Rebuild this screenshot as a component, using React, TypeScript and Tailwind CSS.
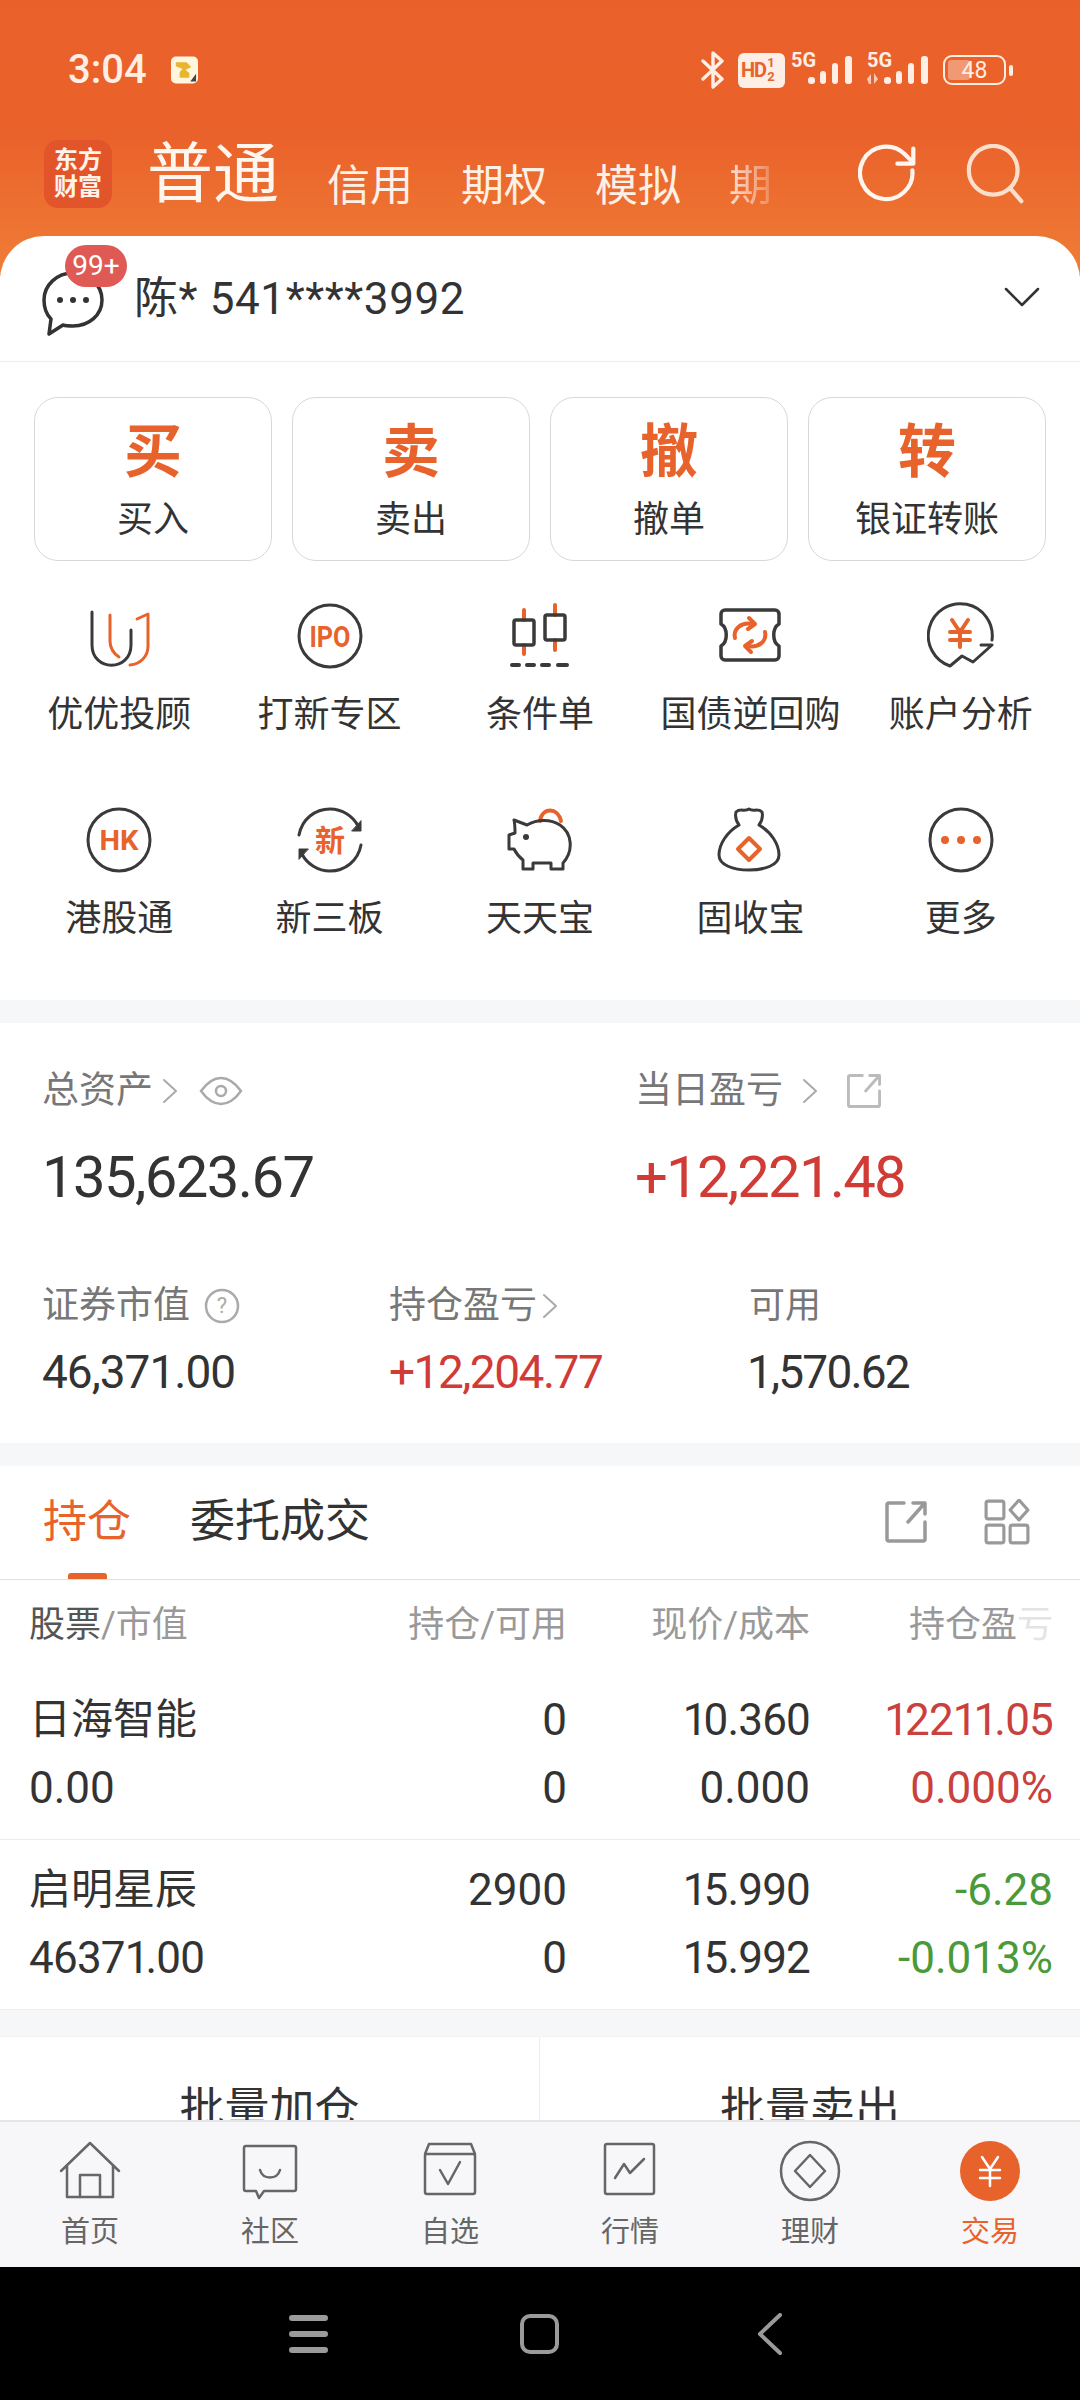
const ORANGE = "#e8632c";
const DARK = "#3a3a3a";

const actions = [
  { char: "买", label: "买入" },
  { char: "卖", label: "卖出" },
  { char: "撤", label: "撤单" },
  { char: "转", label: "银证转账" },
];

function GridSvg({ children }: { children: React.ReactNode }) {
  return (
    <svg width="68" height="68" viewBox="0 0 68 68" fill="none" stroke={DARK} strokeWidth="3" strokeLinecap="round" strokeLinejoin="round">
      {children}
    </svg>
  );
}

function BadgeText({ text, size, fit }: { text: string; size: number; fit?: number }) {
  return (
    <text x="34" y={34 + size * 0.36} textAnchor="middle" fontSize={size} fontWeight="700" fill={ORANGE} stroke="none" textLength={fit} lengthAdjust={fit ? "spacingAndGlyphs" : undefined} fontFamily="Roboto, 'Noto Sans CJK SC', sans-serif">
      {text}
    </text>
  );
}

const tools: { label: string; icon: React.ReactNode }[] = [
  {
    label: "优优投顾",
    icon: (
      <GridSvg>
        <path d="M7 10v33c0 27 39 27 39 0V28" />
        <path d="M25 13v26c0 7 3 12 9 16" stroke={ORANGE} />
        <path d="M52 17l11-5v32c0 11-8 18-18 19" stroke={ORANGE} />
      </GridSvg>
    ),
  },
  {
    label: "打新专区",
    icon: (
      <GridSvg>
        <circle cx="34" cy="34" r="31" />
        <BadgeText text="IPO" size={30} fit={41} />
      </GridSvg>
    ),
  },
  {
    label: "条件单",
    icon: (
      <GridSvg>
        <path d="M18 8v10M18 43v9M49 3v10M49 38v10" stroke={ORANGE} strokeWidth="4" />
        <rect x="8" y="18" width="20" height="25" rx="2" strokeWidth="3.5" />
        <rect x="39" y="13" width="20" height="25" rx="2" strokeWidth="3.5" />
        <path d="M6 63h7M21 63h7M36 63h7M52 63h9" strokeWidth="4" />
      </GridSvg>
    ),
  },
  {
    label: "国债逆回购",
    icon: (
      <GridSvg>
        <path d="M9 8h50a4 4 0 0 1 4 4v10c-7 4-7 18 0 22v10a4 4 0 0 1-4 4H9a4 4 0 0 1-4-4V44c7-4 7-18 0-22V12a4 4 0 0 1 4-4z" strokeWidth="3.5" />
        <path d="M19 36c-2-9 6-16 17-14" stroke={ORANGE} strokeWidth="4" />
        <path d="M33 16l6 6-7 5" stroke={ORANGE} strokeWidth="4" />
        <path d="M49 30c2 9-6 16-17 14" stroke={ORANGE} strokeWidth="4" />
        <path d="M35 50l-6-6 7-5" stroke={ORANGE} strokeWidth="4" />
      </GridSvg>
    ),
  },
  {
    label: "账户分析",
    icon: (
      <GridSvg>
        <path d="M65 38A32 32 0 1 0 23 64L35 54 46 60 65 43H54" />
        <path d="M25 18l8 12 8-12M33 30v15M23 30h20M23 38h20" stroke={ORANGE} strokeWidth="4" />
      </GridSvg>
    ),
  },
  {
    label: "港股通",
    icon: (
      <GridSvg>
        <circle cx="34" cy="34" r="31" />
        <BadgeText text="HK" size={28} fit={39} />
      </GridSvg>
    ),
  },
  {
    label: "新三板",
    icon: (
      <GridSvg>
        <path d="M3 29C6 13 19 3 34 3c12 0 23 7 28 17" />
        <path d="M65 39c-3 16-16 26-31 26-12 0-23-7-28-17" />
        <path d="M65 15v10h-9z" fill={DARK} strokeWidth="1" />
        <path d="M3 53V43h9z" fill={DARK} strokeWidth="1" />
        <BadgeText text="新" size={30} />
      </GridSvg>
    ),
  },
  {
    label: "天天宝",
    icon: (
      <GridSvg>
        <path d="M34 15c2-14 18-14 21 0" stroke={ORANGE} strokeWidth="4" />
        <path d="M8 14l13 5c10-6 24-6 33 0 12 8 14 26 3 38v6H45v-6H27v6H17v-9c-4-3-7-7-9-11H3V29l6-2c0-5 0-9-1-13z" />
        <circle cx="20" cy="31" r="3" fill={DARK} stroke="none" />
      </GridSvg>
    ),
  },
  {
    label: "固收宝",
    icon: (
      <GridSvg>
        <path d="M23 19c-3-4-4-9-3-13 4-4 9 0 13-3 4 3 9-1 13 3 1 4 0 9-3 13 12 7 20 19 20 30 0 10-14 15-30 15S3 59 3 49c0-11 8-23 20-30z" />
        <path d="M33 32l11 11-11 11-11-11z" stroke={ORANGE} strokeWidth="4" />
      </GridSvg>
    ),
  },
  {
    label: "更多",
    icon: (
      <GridSvg>
        <circle cx="34" cy="34" r="31" />
        <circle cx="18" cy="34" r="4" fill={ORANGE} stroke="none" />
        <circle cx="34" cy="34" r="4" fill={ORANGE} stroke="none" />
        <circle cx="50" cy="34" r="4" fill={ORANGE} stroke="none" />
      </GridSvg>
    ),
  },
];

const holdings = [
  { name: "日海智能", value: "0.00", hold: "0", free: "0", price: "10.360", cost: "0.000", pnl: "12211.05", pct: "0.000%", color: "text-[#c9403c]" },
  { name: "启明星辰", value: "46371.00", hold: "2900", free: "0", price: "15.990", cost: "15.992", pnl: "-6.28", pct: "-0.013%", color: "text-[#4a9a3a]" },
];

function NavSvg({ children }: { children: React.ReactNode }) {
  return (
    <svg width="64" height="64" viewBox="0 0 64 64" fill="none" stroke="#666" strokeWidth="2.5" strokeLinecap="round" strokeLinejoin="round">
      {children}
    </svg>
  );
}

const navItems: { label: string; active?: boolean; icon: React.ReactNode }[] = [
  {
    label: "首页",
    icon: (
      <NavSvg>
        <path d="M3 32L32 4l29 28M9 27v31h46V27" />
        <path d="M22 58V36h20v22" />
      </NavSvg>
    ),
  },
  {
    label: "社区",
    icon: (
      <NavSvg>
        <path d="M8 7h48a2 2 0 0 1 2 2v41a2 2 0 0 1-2 2H26l-5 7-3-7H8a2 2 0 0 1-2-2V9a2 2 0 0 1 2-2z" />
        <path d="M22 31c3 10 17 10 20 0" />
      </NavSvg>
    ),
  },
  {
    label: "自选",
    icon: (
      <NavSvg>
        <path d="M7 15l4-10h42l4 10" />
        <rect x="7" y="15" width="50" height="40" rx="2" />
        <path d="M22 31l8 14 12-22" />
      </NavSvg>
    ),
  },
  {
    label: "行情",
    icon: (
      <NavSvg>
        <rect x="7" y="5" width="49" height="50" rx="2" />
        <path d="M17 39l9-14 6 9 14-14" />
      </NavSvg>
    ),
  },
  {
    label: "理财",
    icon: (
      <NavSvg>
        <circle cx="32" cy="32" r="29" />
        <path d="M32 16l15 16-15 16-15-16z" />
      </NavSvg>
    ),
  },
  {
    label: "交易",
    active: true,
    icon: (
      <svg width="64" height="64" viewBox="0 0 64 64" fill="none">
        <circle cx="32" cy="32" r="30" fill={ORANGE} />
        <path d="M24 18l8 12 8-12M32 30v17M22 31h20M22 39h20" stroke="#fff" strokeWidth="2.5" strokeLinecap="round" />
      </svg>
    ),
  },
];

function Signal({ down }: { down?: boolean }) {
  return (
    <svg width="61" height="36" viewBox="0 0 61 36" fill="#fdeee6" className="mb-[8px]">
      <text x="0" y="19" fontSize="20" fontWeight="700" fontFamily="Roboto, sans-serif">5G</text>
      {down && <path d="M0 31l4-5v10H2zM7 25l4 6-4 5z" opacity=".75" />}
      <rect x="17" y="29" width="7" height="7" rx="3" />
      <rect x="29" y="23" width="6" height="13" rx="3" />
      <rect x="41" y="15" width="6" height="21" rx="3" />
      <rect x="54" y="8" width="7" height="28" rx="3" />
    </svg>
  );
}

// digits in the reference are proportional, so numbers with a 1 sit tighter than Roboto's
function Num({ value }: { value: string }) {
  return (
    <span className={value.includes("1") ? "tracking-[-0.8px]" : ""}>
      {value.split("").map((c, i) =>
        c === "1" ? (
          <span key={i} className="tracking-[-4px]">
            {c}
          </span>
        ) : (
          c
        ),
      )}
    </span>
  );
}

function StatusBar() {
  return (
    <div className="h-[120px] flex items-start justify-between pt-[48px] pl-[68px] pr-[67px] text-[#fdeee6]">
      <div className="flex items-center h-[44px]">
        <span className="text-[40px] font-medium leading-[44px]">3:04</span>
        <svg width="27" height="28" viewBox="0 0 28 28" className="ml-[24px]">
          <rect width="28" height="28" rx="5" fill="#fff6e0" />
          <path d="M5 6h11l5 5-6 3 4 3v5H9v-6l3-3-7-3z" fill="#e9b52f" />
          <path d="M20 26l6-8v8z" fill="#444" />
        </svg>
      </div>
      <div className="flex items-center h-[44px]">
        <svg width="24" height="38" viewBox="0 0 24 38" fill="none" stroke="#fdeee6" strokeWidth="3.4" strokeLinejoin="round" strokeLinecap="round">
          <path d="M2 10l19 18-9 8V2l9 8L2 28" />
        </svg>
        <span className="ml-[13px] w-[47px] h-[35px] rounded-[6px] bg-[#fdeee6] flex items-center pl-[3px] text-[#e8632c] font-bold">
          <span className="text-[20px] leading-none tracking-[-1px]">HD</span>
          <span className="text-[13px] leading-[14px] flex flex-col ml-[1px]">
            <span>1</span>
            <span>2</span>
          </span>
        </span>
        <span className="ml-[6px] flex">
          <Signal />
        </span>
        <span className="ml-[15px] flex">
          <Signal down />
        </span>
        <span className="relative flex items-center ml-[15px]">
          <span className="w-[63px] h-[30px] rounded-[9px] border-[2.5px] border-[#fdeee6] flex items-center justify-center relative">
            <span className="absolute left-[3px] top-[3px] bottom-[3px] w-[22px] rounded-[3px] bg-[#fdeee6]/40" />
            <span className="relative text-[23px] leading-none">48</span>
          </span>
          <span className="w-[4px] h-[11px] ml-[3px] rounded-[2px] bg-[#fdeee6]" />
        </span>
      </div>
    </div>
  );
}

function Header() {
  return (
    <div className="h-[156px] flex items-start pl-[44px] pr-[54px] pt-[20px] text-white">
      <div className="w-[68px] h-[68px] rounded-[14px] bg-[#e2552a] flex flex-col items-center justify-center text-[24px] leading-[27px] font-bold text-[#fff2ea]">
        <span>东方</span>
        <span>财富</span>
      </div>
      <span className="ml-[35px] mt-[1px] w-[131px] text-[66px] leading-[68px] whitespace-nowrap text-[#fff6f0]">普通</span>
      <div className="ml-[49px] mt-[22px] w-[446px] flex gap-[48px] text-[43px] leading-[48px] text-[#fdf0e6] whitespace-nowrap">
        <span>信用</span>
        <span>期权</span>
        <span>模拟</span>
        <span className="bg-gradient-to-r from-white/80 to-white/20 bg-clip-text text-transparent">期</span>
      </div>
      <div className="ml-auto flex items-center gap-[48px] pt-[4px]">
        <svg width="60" height="60" viewBox="0 0 64 64" fill="none" stroke="#fff6f0" strokeWidth="4.5" strokeLinecap="round" strokeLinejoin="round">
          <path d="M58 28a28 28 0 1 1-8-17l8 8" />
          <path d="M59 5v16H42" />
        </svg>
        <svg width="60" height="60" viewBox="0 0 64 64" fill="none" stroke="#fbdfcd" strokeWidth="4.5" strokeLinecap="round">
          <circle cx="29" cy="28" r="26" />
          <path d="M47 47l12 14" />
        </svg>
      </div>
    </div>
  );
}

function AccountRow() {
  return (
    <div className="h-[126px] border-b border-[#ececec] flex items-center pl-[41px] pr-[40px]">
      <div className="relative w-[64px] h-[66px] mt-[8px]">
        <svg width="64" height="66" viewBox="0 0 64 66" fill="none" stroke="#333" strokeWidth="3.5" strokeLinejoin="round">
          <path d="M32 3c16 0 29 12 29 27S48 56 32 56c-4 0-7 0-10-1L8 64l2-15C5 44 3 37 3 30 3 15 16 3 32 3z" />
          <circle cx="19" cy="30" r="3" fill="#333" stroke="none" />
          <circle cx="32" cy="30" r="3" fill="#333" stroke="none" />
          <circle cx="45" cy="30" r="3" fill="#333" stroke="none" />
        </svg>
        <span className="absolute left-[24px] -top-[25px] w-[62px] h-[42px] rounded-[21px] bg-[#e05a55] text-white text-[28px] leading-[42px] text-center">99+</span>
      </div>
      <span className="ml-[29px] text-[44px] leading-[52px] text-[#333] tracking-[0.6px]">陈* 541****3992</span>
      <svg width="36" height="22" viewBox="0 0 36 22" fill="none" stroke="#333" strokeWidth="2.5" strokeLinecap="round" strokeLinejoin="round" className="ml-auto -mt-[4px]">
        <path d="M2 3l16 16L34 3" />
      </svg>
    </div>
  );
}

function AccountActions() {
  return (
    <div className="pb-[59px]">
      <div className="grid grid-cols-4 gap-[20px] px-[34px] pt-[35px]">
        {actions.map((a) => (
          <div key={a.char} className="h-[164px] rounded-[24px] border border-[#d8d8d8] flex flex-col items-center">
            <span className="mt-[19px] text-[58px] leading-[70px] font-bold text-[#e8632c]">{a.char}</span>
            <span className="mt-[11px] text-[36px] leading-[44px] text-[#333]">{a.label}</span>
          </div>
        ))}
      </div>
      <div className="grid grid-cols-5 gap-y-[69px] px-[14px] mt-[41px]">
        {tools.map((t) => (
          <div key={t.label} className="flex flex-col items-center">
            <div className="h-[68px]">{t.icon}</div>
            <span className="mt-[23px] text-[36px] leading-[44px] text-[#333] whitespace-nowrap">{t.label}</span>
          </div>
        ))}
      </div>
    </div>
  );
}

function Chevron({ className = "" }: { className?: string }) {
  return (
    <svg width="16" height="28" viewBox="0 0 16 28" fill="none" stroke="#aaa" strokeWidth="2" strokeLinecap="round" strokeLinejoin="round" className={className}>
      <path d="M2 3l12 11L2 25" />
    </svg>
  );
}

function ExportIcon({ size, color }: { size: number; color: string }) {
  return (
    <svg width={size} height={size} viewBox="0 0 44 44" fill="none" stroke={color} strokeWidth="3.5" strokeLinecap="round" strokeLinejoin="round">
      <path d="M20 3H5a2 2 0 0 0-2 2v34a2 2 0 0 0 2 2h34a2 2 0 0 0 2-2V22" />
      <path d="M24 22L40 4M29 3h12v11" />
    </svg>
  );
}

function Assets() {
  return (
    <div className="pl-[42px] pr-[43px] pt-[46px] pb-[43px]">
      <div className="flex">
        <div className="w-[593px]">
          <div className="h-[44px] flex items-center text-[37px] text-[#777]">
            总资产
            <Chevron className="ml-[9px]" />
            <svg width="44" height="30" viewBox="0 0 44 30" fill="none" stroke="#aaa" strokeWidth="2.5" className="ml-[21px]">
              <path d="M2 15C10 4 16 2 22 2s12 2 20 13c-8 11-14 13-20 13S10 26 2 15z" />
              <circle cx="22" cy="15" r="5" />
            </svg>
          </div>
          <div className="mt-[29px] h-[70px] text-[58px] leading-[70px] text-[#333] tracking-[-1.6px]">135,623.67</div>
        </div>
        <div>
          <div className="h-[44px] flex items-center text-[37px] text-[#777]">
            当日盈亏
            <Chevron className="ml-[19px]" />
            <span className="ml-[28px]">
              <ExportIcon size={36} color="#bbb" />
            </span>
          </div>
          <div className="mt-[29px] h-[70px] text-[58px] leading-[70px] text-[#d03b36] tracking-[-1.8px]">+12,221.48</div>
        </div>
      </div>
      <div className="flex mt-[72px]">
        <div className="w-[347px]">
          <div className="h-[44px] flex items-center text-[37px] text-[#777]">
            证券市值
            <svg width="36" height="36" viewBox="0 0 36 36" className="ml-[14px]">
              <circle cx="18" cy="18" r="16" fill="none" stroke="#aaa" strokeWidth="2.5" />
              <text x="18" y="25" textAnchor="middle" fontSize="22" fill="#aaa" fontFamily="Roboto, sans-serif">?</text>
            </svg>
          </div>
          <div className="mt-[16px] h-[56px] text-[46px] leading-[56px] text-[#333] tracking-[-1px]">46,371.00</div>
        </div>
        <div className="w-[360px]">
          <div className="h-[44px] flex items-center text-[37px] text-[#777]">
            持仓盈亏
            <Chevron className="ml-[5px]" />
          </div>
          <div className="mt-[16px] h-[56px] text-[46px] leading-[56px] text-[#d03b36] tracking-[-1.5px]">+12,204.77</div>
        </div>
        <div>
          <div className="h-[44px] flex items-center text-[36px] text-[#777]">可用</div>
          <div className="mt-[16px] h-[56px] -ml-[2px] text-[46px] leading-[56px] text-[#333] tracking-[-1.8px]">1,570.62</div>
        </div>
      </div>
    </div>
  );
}

function HoldingsTabs() {
  return (
    <div className="relative h-[114px] border-b border-[#e0e0e0] flex items-center pl-[43px] pr-[50px]">
      <span className="text-[44px] leading-[56px] text-[#e8632c] -mt-[2px]">持仓</span>
      <span className="ml-[59px] text-[45px] leading-[56px] text-[#333] -mt-[2px]">委托成交</span>
      <span className="absolute left-[68px] bottom-0 w-[39px] h-[6px] rounded-t-[3px] bg-[#e8632c]" />
      <span className="ml-auto -mt-[2px] mr-[56px]">
        <ExportIcon size={44} color="#999" />
      </span>
      <svg width="46" height="46" viewBox="0 0 44 44" fill="none" stroke="#999" strokeWidth="3" strokeLinejoin="round" className="-mt-[2px]">
        <rect x="2" y="2" width="17" height="17" rx="2" />
        <rect x="2" y="25" width="17" height="17" rx="2" />
        <rect x="25" y="25" width="17" height="17" rx="2" />
        <path d="M33.5 1L42 10.5 33.5 20 25 10.5z" />
      </svg>
    </div>
  );
}

function HoldingsTable() {
  return (
    <div>
      <div className="h-[90px] grid grid-cols-[298px_240px_243px_243px] items-center pl-[29px] text-[36px] text-[#999]">
        <span className="whitespace-nowrap">
          <span className="text-[#555]">股票</span>/市值
        </span>
        <span className="text-right">持仓/可用</span>
        <span className="text-right">现价/成本</span>
        <span className="text-right whitespace-nowrap">
          持仓盈<span className="text-[#e4e4e4]">亏</span>
        </span>
      </div>
      {holdings.map((h) => (
        <div key={h.name} className="border-b border-[#ececec] pt-[16px] pb-[17px] pl-[29px] grid grid-cols-[298px_240px_243px_243px] text-[44px] leading-[68px] text-[#333]">
          <span className="text-[42px]">{h.name}</span>
          <span className="text-right">{h.hold}</span>
          <span className="text-right"><Num value={h.price} /></span>
          <span className={`text-right ${h.color}`}><Num value={h.pnl} /></span>
          <span><Num value={h.value} /></span>
          <span className="text-right">{h.free}</span>
          <span className="text-right"><Num value={h.cost} /></span>
          <span className={`text-right ${h.color}`}>{h.pct}</span>
        </div>
      ))}
    </div>
  );
}

function BatchButtons() {
  return (
    <div className="mt-[26px] grid grid-cols-2 h-[146px] bg-white border-t border-[#f2f2f2]">
      <div className="flex items-center justify-center text-[45px] text-[#333] border-r border-[#ececec]">批量加仓</div>
      <div className="flex items-center justify-center text-[45px] text-[#333]">批量卖出</div>
    </div>
  );
}

export default function App() {
  return (
    <div className="w-[1080px] h-[2400px] overflow-hidden flex flex-col bg-[#f6f7f9] font-[Roboto,'Noto_Sans_CJK_SC',sans-serif]">
      <div className="flex-1 min-h-0 overflow-hidden">
        <div className="h-[276px] -mb-[40px] bg-gradient-to-b from-[#ea602a] via-[#ea622b] to-[#ef7d36]">
          <StatusBar />
          <Header />
        </div>
        <div className="relative rounded-t-[44px] bg-white">
          <AccountRow />
          <AccountActions />
        </div>
        <div className="mt-[23px] bg-white">
          <Assets />
        </div>
        <div className="mt-[23px] bg-white">
          <HoldingsTabs />
          <HoldingsTable />
        </div>
        <BatchButtons />
      </div>

      <div className="h-[147px] shrink-0 grid grid-cols-6 bg-[#f7f7f9] border-t-2 border-[#e6e6e8]">
        {navItems.map((n) => (
          <div key={n.label} className="flex flex-col items-center pt-[17px]">
            {n.icon}
            <span className={`mt-[11px] text-[29px] leading-[36px] ${n.active ? "text-[#e8632c]" : "text-[#666]"}`}>{n.label}</span>
          </div>
        ))}
      </div>

      <div className="h-[133px] shrink-0 bg-black flex items-center pl-[289px]">
        <div className="w-[39px] flex flex-col gap-[10px]">
          <span className="h-[6px] rounded-full bg-[#9a9a9a]" />
          <span className="h-[6px] rounded-full bg-[#9a9a9a]" />
          <span className="h-[6px] rounded-full bg-[#9a9a9a]" />
        </div>
        <span className="ml-[192px] w-[39px] h-[40px] rounded-[10px] border-[4px] border-[#9a9a9a]" />
        <svg width="25" height="42" viewBox="0 0 25 42" fill="none" stroke="#9a9a9a" strokeWidth="4" strokeLinecap="round" strokeLinejoin="round" className="ml-[198px]">
          <path d="M23 2L3 21l20 19" />
        </svg>
      </div>
    </div>
  );
}
